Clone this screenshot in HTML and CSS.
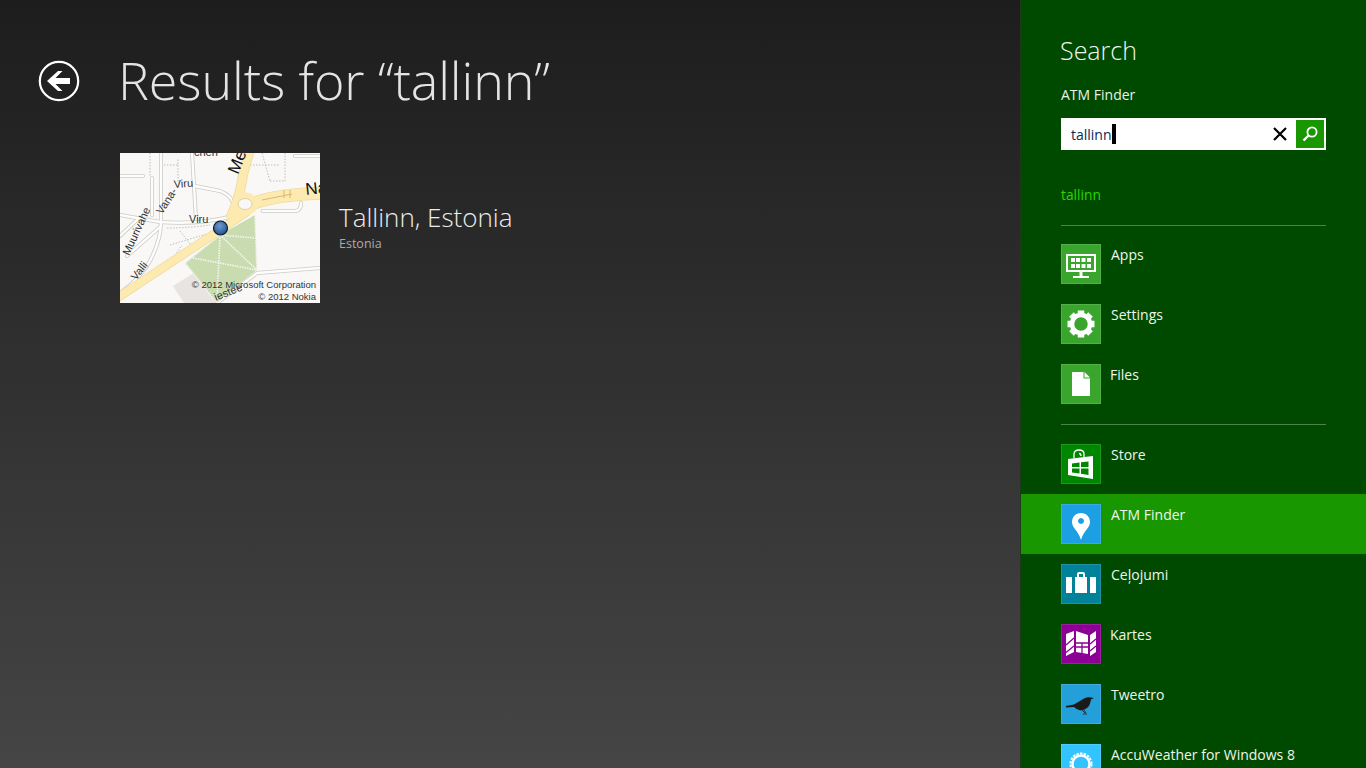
FILE: index.html
```html
<!DOCTYPE html>
<html lang="en">
<head>
<meta charset="utf-8">
<title>Results for tallinn</title>
<link rel="stylesheet" href="styles.css">
</head>
<body>
<main class="results">
  <header class="results-head">
    <svg class="back" width="42" height="42" viewBox="0 0 42 42"><circle cx="21" cy="21" r="19.2" fill="none" stroke="#fff" stroke-width="2.2"/><path d="M9 21 L20 11 H24.5 L17.5 18 H32 V24 H17.5 L24.5 31 H20 Z" fill="#fff"/></svg>
    <h1>Results for “tallinn”</h1>
  </header>
  <article class="result">
    <svg class="map" width="200" height="150" viewBox="0 0 200 150">
      <rect width="200" height="150" fill="#f9f8f6"/>
      <path d="M53 133 L77 118 L100 150 H64 Z" fill="#e8e4e2"/>
      <path d="M0 23 H23 M32 62 V25 M41 0 V68 Q41 90 27 113 Q15 130 0 140 M72 0 L76 66 M0 62 L40 69 Q80 72 113 63 M0 83 L17 67 M7 103 L40 74 M75 33 L100 38 Q110 42 112 48 M143 58 H176 Q181 57 181 50 M175 3 H200 M137 120 L200 115 M137 120 L97 150"
        fill="none" stroke="#cbcbc7" stroke-width="4" stroke-linecap="round"/>
      <path d="M0 23 H23 M32 62 V25 M41 0 V68 Q41 90 27 113 Q15 130 0 140 M72 0 L76 66 M0 62 L40 69 Q80 72 113 63 M0 83 L17 67 M7 103 L40 74 M75 33 L100 38 Q110 42 112 48 M143 58 H176 Q181 57 181 50 M175 3 H200 M137 120 L200 115 M137 120 L97 150"
        fill="none" stroke="#fdfdfc" stroke-width="2.4" stroke-linecap="round"/>
      <g fill="none" stroke="#bdbdb9" stroke-width="1" stroke-dasharray="1.500 1.500">
        <path d="M30 0 V23 M44 12 H58 V5 M58 12 V30 M47 75 Q70 75 90 72 M50 92 L90 80 M60 78 L74 96 M142 0 L150 28 M130 12 H160 M50 110 L62 92 M150 28 H165 V0"/>
      </g>
      <path d="M65 110 L100 82 L135 62 L137 117 L110 138 L97 150 Z" fill="#c9dcaf"/>
      <g fill="none" stroke="#f4f4f1" stroke-width="1.700" stroke-dasharray="1.500 1">
        <path d="M100 82 L137 117 M100 82 L65 110 M100 82 L97 150 M100 82 L135 85 M73 105 L137 117 M135 62 L137 117 M65 110 L97 150"/>
      </g>
      <path d="M-6 147 L100 77 L128 58" fill="none" stroke="#eedb9f" stroke-width="9"/>
      <path d="M110 66 Q120 44 123 22 L130 -4" fill="none" stroke="#eedb9f" stroke-width="10"/>
      <path d="M134 50 Q160 41 206 40" fill="none" stroke="#eedb9f" stroke-width="13"/>
      <path d="M-6 147 L100 77 L128 58" fill="none" stroke="#fdeab0" stroke-width="7.500"/>
      <path d="M110 66 Q120 44 123 22 L130 -4" fill="none" stroke="#fdeab0" stroke-width="8.500"/>
      <path d="M134 50 Q160 41 206 40" fill="none" stroke="#fdeab0" stroke-width="11.500"/>
      <ellipse cx="125" cy="51" rx="10" ry="8.500" fill="#f9f8f6" stroke="#fdeab0" stroke-width="6"/>
      <ellipse cx="125" cy="51" rx="7" ry="5.500" fill="#f9f8f6" stroke="#d9c68e" stroke-width=".8"/>
      <path d="M142 47 L172 41 M164 37 V45 M170 37 V45" stroke="#d9b86c" stroke-width="1" fill="none"/>
      <g class="map-label">
        <text x="74" y="3">chen</text>
        <text transform="translate(9 103) rotate(-65)">Muurivahe</text>
        <text transform="translate(16 128) rotate(-52)">Valli</text>
        <text transform="translate(42 62) rotate(-57)">Vana-</text>
        <text transform="translate(54 35) rotate(-4)">Viru</text>
        <text x="69" y="70">Viru</text>
        <text class="map-large" transform="translate(118 22) rotate(-68)">Me</text>
        <text class="map-large" transform="translate(186 42) rotate(-6)">Na</text>
        <text transform="translate(96 148) rotate(-22)">iestee</text>
      </g>
      <text class="map-copy" x="196" y="135" text-anchor="end">© 2012 Microsoft Corporation</text>
      <text class="map-copy" x="196" y="147" text-anchor="end">© 2012 Nokia</text>
      <defs><radialGradient id="pin" cx=".45" cy=".35" r=".7"><stop offset="0" stop-color="#6d9ad0"/><stop offset="1" stop-color="#204c86"/></radialGradient></defs>
      <circle cx="100.500" cy="75" r="7" fill="url(#pin)" stroke="#0c1a2c" stroke-width="1.200"/>
    </svg>
    <div class="result-text">
      <h2>Tallinn, Estonia</h2>
      <p>Estonia</p>
    </div>
  </article>
</main>
<aside class="charm">
  <h2 class="charm-title">Search</h2>
  <div class="charm-app">ATM Finder</div>
  <div class="searchbox">
    <span class="query">tallinn</span><span class="caret"></span>
    <svg class="clear" width="16" height="16" viewBox="0 0 16 16"><path d="M2 2 L14 14 M14 2 L2 14" stroke="#000" stroke-width="2.200"/></svg>
    <span class="go"><svg width="18" height="18" viewBox="0 0 18 18"><circle cx="11" cy="7" r="4.600" fill="none" stroke="#fff" stroke-width="1.800"/><path d="M7.500 10.500 L2.500 15.500" stroke="#fff" stroke-width="2.400"/></svg></span>
  </div>
  <div class="suggestion">tallinn</div>
  <hr class="rule">
  <ul class="apps">
    <li class="app">
      <span class="tile tile-sys"><svg width="40" height="40" viewBox="0 0 40 40"><path d="M5 10 H35 V28 H5 Z M7 12 V26 H33 V12 Z" fill="#fff" fill-rule="evenodd"/><path d="M10 14h4v4h-4zM15 14h4v4h-4zM20.500 14h4v4h-4zM26 14h4v4h-4zM10 20h4v4h-4zM15 20h4v4h-4zM20.500 20h4v4h-4zM26 20h4v4h-4zM18.500 28h3v4h-3zM12 32 H28 V34 H12 Z" fill="#fff"/></svg></span>
      <span class="app-name">Apps</span>
    </li>
    <li class="app">
      <span class="tile tile-sys"><svg width="40" height="40" viewBox="0 0 40 40"><circle cx="20" cy="20" r="9" fill="none" stroke="#fff" stroke-width="4.500"/><g fill="#fff"><rect x="16.750" y="6.500" width="6.500" height="6"/><rect x="16.750" y="27.500" width="6.500" height="6"/><rect x="6.500" y="16.750" width="6" height="6.500"/><rect x="27.500" y="16.750" width="6" height="6.500"/><rect x="16.750" y="6.500" width="6.500" height="6" transform="rotate(45 20 20)"/><rect x="16.750" y="6.500" width="6.500" height="6" transform="rotate(135 20 20)"/><rect x="16.750" y="6.500" width="6.500" height="6" transform="rotate(225 20 20)"/><rect x="16.750" y="6.500" width="6.500" height="6" transform="rotate(315 20 20)"/></g></svg></span>
      <span class="app-name">Settings</span>
    </li>
    <li class="app">
      <span class="tile tile-sys"><svg width="40" height="40" viewBox="0 0 40 40"><path fill="#fff" d="M11 8 H22.500 V14.500 H29 V32 H11 Z M23.500 8 L29 13.500 H23.500 Z"/></svg></span>
      <span class="app-name app-name-tight">Files</span>
    </li>
  </ul>
  <hr class="rule rule-low">
  <ul class="apps">
    <li class="app">
      <span class="tile tile-store"><svg width="40" height="40" viewBox="0 0 40 40"><path fill="#fff" fill-rule="evenodd" d="M7 15 L32 12 V35 L7 31 Z M11 19.500 V23 H18.500 V18.500 Z M20 18.300 V23 H27.500 V17.500 Z M11 24.500 V28.500 L18.500 29.500 V24.500 Z M20 24.500 V29.800 L27.500 31 V24.500 Z"/><path d="M13 14 V10 Q13 6 18 6 Q23 6 23 10 V13 M18 9.500 Q20 9.500 20 12" fill="none" stroke="#fff" stroke-width="1.300"/></svg></span>
      <span class="app-name">Store</span>
    </li>
    <li class="app app-active">
      <span class="tile tile-atm"><svg width="40" height="40" viewBox="0 0 40 40"><path fill="#fff" fill-rule="evenodd" d="M20 9 C14.500 9 11 13 11 18 C11 24 17 26 20 36 C23 26 29 24 29 18 C29 13 25.500 9 20 9 Z M20 14 A3 3 0 1 0 20.010 14 Z"/></svg></span>
      <span class="app-name">ATM Finder</span>
    </li>
    <li class="app">
      <span class="tile tile-travel"><svg width="40" height="40" viewBox="0 0 40 40"><path fill="#fff" fill-rule="evenodd" d="M5 13 H11 V29 H5 Z M29 13 H35 V29 H29 Z M14 13 H16 V10 Q16 8 18 8 H22 Q24 8 24 10 V13 H26 V29 H14 Z M18 10 V13 H22 V10 Z"/></svg></span>
      <span class="app-name">Ceļojumi</span>
    </li>
    <li class="app">
      <span class="tile tile-maps"><svg width="40" height="40" viewBox="0 0 40 40"><path fill="#fff" d="M5 10 L13 7 V28 L5 32 Z M15 7 L27 11 V30 L15 28 Z M29 11 L35 7 V28 L29 32 Z"/><path d="M5 21 L13 14 M5 28.500 L13 22 M15 19 H27 M15 23 H27 M21 19 V30 M29 20 L35 15 M29 27 L35 22" fill="none" stroke="#8c0095" stroke-width="1.300"/></svg></span>
      <span class="app-name app-name-tight">Kartes</span>
    </li>
    <li class="app">
      <span class="tile tile-tweet"><svg width="40" height="40" viewBox="0 0 40 40"><path fill="#1a1a1a" d="M5 22 L13 20.500 Q19 17 23 14.500 Q27 12.500 30 13.500 L33 14 L30 15.500 Q29 22 26 24 Q22 27 18 26 Q15 25 13 23 L5 23.500 Z"/><path d="M21 26 L24 29 M23 26 L25 29 M22 30 H26" stroke="#1a1a1a" stroke-width=".8" fill="none"/></svg></span>
      <span class="app-name">Tweetro</span>
    </li>
    <li class="app">
      <span class="tile tile-weather"><svg width="40" height="40" viewBox="0 0 40 40"><circle cx="20" cy="20" r="8.500" fill="none" stroke="#fff" stroke-width="2.400"/><circle cx="20" cy="20" r="10.500" fill="none" stroke="#fff" stroke-width="2" stroke-dasharray="2.500 1.200"/></svg></span>
      <span class="app-name">AccuWeather for Windows 8</span>
    </li>
  </ul>
</aside>
</body>
</html>
```

FILE: styles.css
```css
* { box-sizing: border-box; }
html, body { height: 100%; }
body {
  margin: 0;
  display: flex;
  height: 768px;
  overflow: hidden;
  font-family: "Open Sans", "Liberation Sans", sans-serif;
  color: #fff;
}
.results {
  flex: 0 0 1021px;
  padding: 50px 0 0 38px;
  background: linear-gradient(#1d1d1d, #454545);
  border-right: 1px solid #1d3a1d;
}
.results-head {
  display: flex;
  align-items: center;
  height: 62px;
}
.back { flex: none; margin-right: 38px; }
h1 {
  margin: 0 0 2px;
  font-size: 52px;
  font-weight: 300;
  line-height: 62px;
  color: #e4e4e4;
  letter-spacing: -0.1px;
}
.result {
  display: flex;
  align-items: center;
  margin: 41px 0 0 82px;
}
.map { display: block; flex: none; }
.map-label { font: 11px "Liberation Sans", sans-serif; fill: #333; }
.map-large { font-size: 17px; fill: #111; }
.map-copy { font: 9.500px "Liberation Sans", sans-serif; fill: #333; }
.result-text { margin-left: 19px; padding-bottom: 3px; }
.result-text h2 {
  margin: 0;
  font-size: 26px;
  font-weight: 300;
  line-height: 30px;
  color: #ececec;
}
.result-text p {
  margin: 3px 0 0;
  font-size: 12.500px;
  line-height: 17px;
  color: #aaa;
}
.charm {
  flex: 0 0 345px;
  padding-top: 33px;
  background: #004a00;
  overflow: hidden;
}
.charm-title {
  margin: 0 0 0 39px;
  font-size: 25px;
  font-weight: 300;
  line-height: 35px;
  color: #f0f6f0;
}
.charm-app {
  margin: 17px 0 0 40px;
  font-size: 14px;
  line-height: 20px;
  color: #e8f2e8;
}
.searchbox {
  display: flex;
  align-items: center;
  width: 265px;
  height: 32px;
  margin: 13px 0 0 40px;
  padding: 2px 2px 2px 10px;
  background: #fff;
}
.query { font-size: 14px; color: #0a2a55; }
.caret { width: 4px; height: 20px; background: #000; }
.clear { margin-left: auto; margin-right: 8px; }
.go {
  display: flex;
  align-items: center;
  justify-content: center;
  width: 28px;
  height: 28px;
  background: #189700;
}
.suggestion {
  margin: 35px 0 0 40px;
  font-size: 13.800px;
  line-height: 20px;
  color: #28d800;
}
.rule {
  width: 265px;
  height: 1px;
  margin: 20px 0 0 40px;
  border: 0;
  background: #4d814d;
}
.rule-low { margin-top: 10px; margin-bottom: 9px; }
.apps { margin: 8px 0 0; padding: 0; list-style: none; }
.rule-low + .apps { margin-top: 0; }
.app {
  display: flex;
  height: 60px;
  padding: 10px 0 0 40px;
}
.app-active { background: #189700; }
.tile {
  flex: none;
  width: 40px;
  height: 40px;
  outline: 1px solid rgba(255, 255, 255, .12);
  outline-offset: -1px;
}
.tile svg { display: block; }
.tile-sys { background: #3aa52d; }
.tile-store { background: #008700; }
.tile-atm { background: #1d9fe3; }
.tile-travel { background: #00829b; }
.tile-maps { background: #8c0095; }
.tile-tweet { background: #239fd9; }
.tile-weather { background: #33c4ff; }
.app-name {
  margin: 1px 0 0 10px;
  font-size: 14px;
  line-height: 20px;
  color: #eef6ee;
}
.app-name-tight { margin-left: 9px; }
```
